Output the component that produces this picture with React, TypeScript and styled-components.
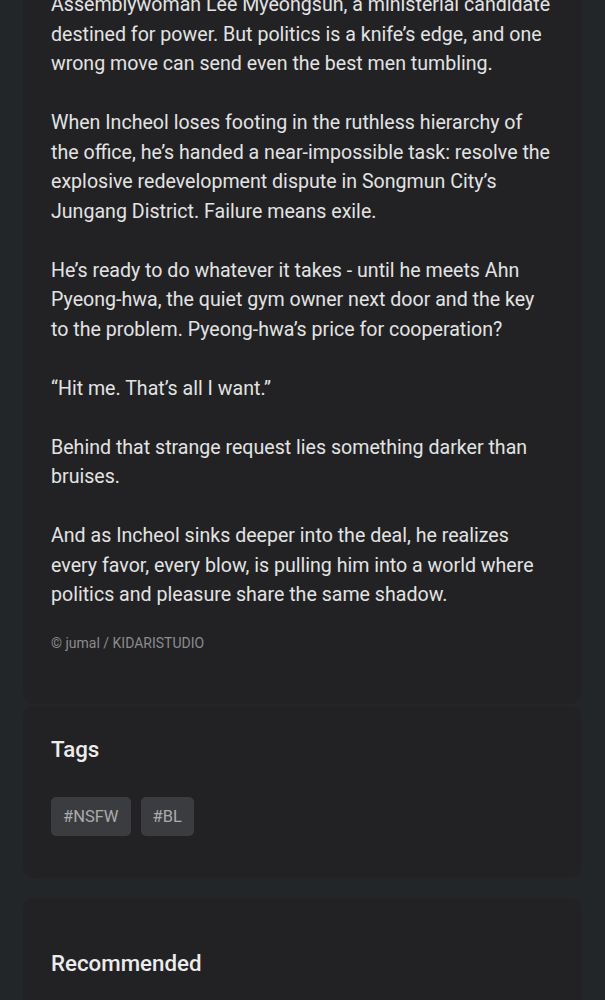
import React, {FC} from 'react';

import styled, {createGlobalStyle} from 'styled-components';

const GlobalStyle = createGlobalStyle`
    html, body {
        margin: 0;
        padding: 0;
        background: #232628;
    }

    body {
        font-family: Roboto, 'Liberation Sans', sans-serif;
        -webkit-font-smoothing: antialiased;
    }
`;

const paragraphs = [
    'Assemblywoman Lee Myeongsun, a ministerial candidate destined for power. But politics is a knife\u2019s edge, and one wrong move can send even the best men tumbling.',
    'When Incheol loses footing in the ruthless hierarchy of the office, he\u2019s handed a near-impossible task: resolve the explosive redevelopment dispute in Songmun City\u2019s Jungang District. Failure means exile.',
    'He\u2019s ready to do whatever it takes - until he meets Ahn Pyeong-hwa, the quiet gym owner next door and the key to the problem. Pyeong-hwa\u2019s price for cooperation?',
    '\u201cHit me. That\u2019s all I want.\u201d',
    'Behind that strange request lies something darker than bruises.',
    'And as Incheol sinks deeper into the deal, he realizes every favor, every blow, is pulling him into a world where politics and pleasure share the same shadow.',
];

const tags = ['#NSFW', '#BL'];

const App: FC = () => {
    return (
        <>
            <GlobalStyle/>
            <Page>
                <DescriptionCard>
                    <Synopsis>
                        {paragraphs.map((text) => (
                            <Paragraph key={text}>{text}</Paragraph>
                        ))}
                    </Synopsis>
                    <Copyright>{'\u00a9 jumal / KIDARISTUDIO'}</Copyright>
                </DescriptionCard>
                <Section $top={29} $bottom={42}>
                    <SectionTitle>{'Tags'}</SectionTitle>
                    <TagList>
                        {tags.map((tag) => (
                            <Tag key={tag}>{tag}</Tag>
                        ))}
                    </TagList>
                </Section>
                <Section $top={51} $bottom={60}>
                    <SectionTitle>{'Recommended'}</SectionTitle>
                </Section>
            </Page>
        </>
    );
};

const Page = styled.div`
    display: flex;
    flex-direction: column;
    margin-top: -10px;
    padding: 0 23px;
`;

const Card = styled.div`
    display: flex;
    flex-direction: column;
    background: #222224;
    border-radius: 12px;
    padding-left: 28px;
    padding-right: 28px;
`;

const DescriptionCard = styled(Card)`
    border-top-left-radius: 0;
    border-top-right-radius: 0;
    padding-bottom: 51px;
`;

const Synopsis = styled.div`
    display: flex;
    flex-direction: column;
    gap: 29.5px;
`;

const Paragraph = styled.p`
    margin: 0;
    font-size: 19.6px;
    line-height: 29.5px;
    color: #e3e3e3;
`;

const Copyright = styled.div`
    margin-top: 23px;
    font-size: 14px;
    line-height: 20px;
    color: #8b8b8d;
`;

const Section = styled(Card)<{$top: number; $bottom: number}>`
    margin-top: 2px;
    padding-top: ${(p) => p.$top}px;
    padding-bottom: ${(p) => p.$bottom}px;

    & + & {
        margin-top: 20px;
    }
`;

const SectionTitle = styled.h2`
    margin: 0;
    font-size: 22.3px;
    font-weight: 500;
    line-height: 28px;
    color: #ececec;
`;

const TagList = styled.div`
    display: flex;
    gap: 10px;
    margin-top: 34px;
`;

const Tag = styled.span`
    display: flex;
    align-items: center;
    height: 39px;
    padding: 0 12px;
    border-radius: 5px;
    background: #3b3c3f;
    font-size: 16.5px;
    color: #ababad;
`;

export default App;
